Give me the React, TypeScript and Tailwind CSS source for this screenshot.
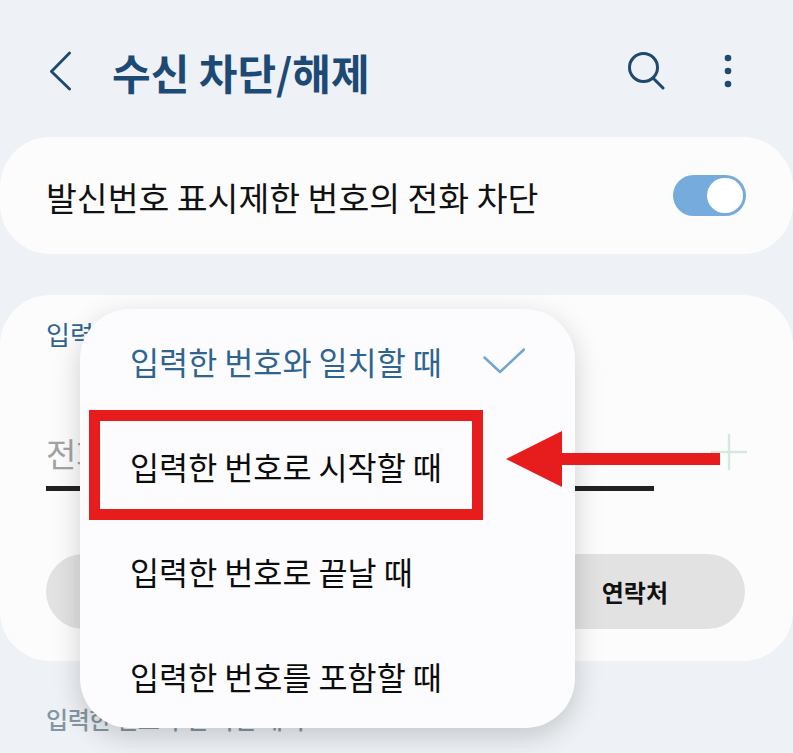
const font = { fontFamily: '"Noto Sans CJK KR", "Noto Sans", sans-serif' };

function Option({ text, active, check }: { text: string; active?: boolean; check?: boolean }) {
  return (
    <div className={`flex h-[105px] items-center justify-between pl-[50px] pr-[50px] text-[31.6px] ${active ? "text-[#2f648f]" : "text-[#0c0c0c]"}`}>
      <span className="whitespace-nowrap">{text}</span>
      {check && (
        <svg width="42" height="26" viewBox="0 0 42 26" fill="none" className="shrink-0 -mt-[2px]">
          <path d="M1.5 9.5 L17 24 L41 1.5" stroke="#74a5cf" strokeWidth="2.5" strokeLinecap="round" strokeLinejoin="round" />
        </svg>
      )}
    </div>
  );
}

export default function App() {
  return (
    <div style={font} className="relative h-[753px] w-[793px] overflow-hidden bg-[#eef1f5]">
      <header className="flex h-[137px] items-center pl-[48px] pr-[60px] pt-[4px]">
        <svg width="24" height="40" viewBox="0 0 24 42" fill="none">
          <path d="M22 2 L3 21.5 L22 40" stroke="#1f4a70" strokeWidth="3" strokeLinecap="round" strokeLinejoin="round" />
        </svg>
        <h1 className="ml-[40px] mt-[3px] whitespace-nowrap text-[42px] font-bold leading-none text-[#1c4a75]">수신 차단/해제</h1>
        <div className="ml-auto flex items-center gap-[58px]">
          <svg width="38" height="38" viewBox="0 0 38 38" fill="none">
            <circle cx="16.5" cy="15.5" r="14" stroke="#1f4a70" strokeWidth="3" />
            <path d="M26 26 L36 36" stroke="#1f4a70" strokeWidth="3" strokeLinecap="round" />
          </svg>
          <svg width="10" height="36" viewBox="0 0 10 36" fill="#1f4a70">
            <circle cx="5" cy="5" r="3.3" />
            <circle cx="5" cy="18" r="3.3" />
            <circle cx="5" cy="31" r="3.3" />
          </svg>
        </div>
      </header>

      <section className="flex h-[117px] items-center justify-between rounded-[50px] bg-[#fcfcfd] pl-[46px] pr-[47px]">
        <span className="mt-[3px] whitespace-nowrap text-[33.5px] leading-none text-[#111]">발신번호 표시제한 번호의 전화 차단</span>
        <div className="flex h-[41px] w-[73px] items-center justify-end rounded-full bg-[#76abdd] pr-[3px]">
          <div className="h-[35px] w-[36px] rounded-full bg-white" />
        </div>
      </section>

      <section className="mt-[41px] h-[366px] rounded-[50px] bg-[#fcfcfd] pl-[46px] pr-[48px] pt-[22px]">
        <div className="text-[26px] leading-[34px] text-[#2f648f]">입력한 번호와 일치할 때</div>
        <div className="mt-[80px] mr-[91px] h-[60px] border-b-[5px] border-[#222] text-[33px] leading-[44px] text-[#a3a3a3]">
          전화번호
        </div>
        <div className="-mt-[58px] flex justify-end">
          <svg width="38" height="38" viewBox="0 0 38 38" fill="none" className="-mr-[3px]">
            <path d="M19 1 V37 M1 19 H37" stroke="#d5eadf" strokeWidth="2.5" />
          </svg>
        </div>
        <div className="mt-[83px] flex h-[75px] items-center justify-end rounded-[38px] bg-[#e2e2e2] pr-[77px] text-[24px] font-bold text-[#111]">
          연락처
        </div>
      </section>

      <div className="px-[46px] pt-[41px] text-[24px] font-medium leading-[34px] tracking-[-0.4px] text-[#84969f]">입력한 번호 수신 차단 내역</div>

      <div className="absolute left-[80px] top-[309px] h-[419px] w-[495px] rounded-[50px] bg-[#fcfcfe] shadow-[0_8px_28px_rgba(0,0,0,0.18)]">
        <Option text="입력한 번호와 일치할 때" active check />
        <Option text="입력한 번호로 시작할 때" />
        <Option text="입력한 번호로 끝날 때" />
        <Option text="입력한 번호를 포함할 때" />
      </div>

      <div className="absolute left-[89px] top-[410px] h-[110px] w-[394px] border-[11px] border-[#e71c1c]" />
      <svg width="216" height="58" viewBox="0 0 216 58" className="absolute left-[506px] top-[430px]">
        <path d="M0 29 L56 1 V23 H214 V35 H56 V57 Z" fill="#e71c1c" />
      </svg>
    </div>
  );
}
